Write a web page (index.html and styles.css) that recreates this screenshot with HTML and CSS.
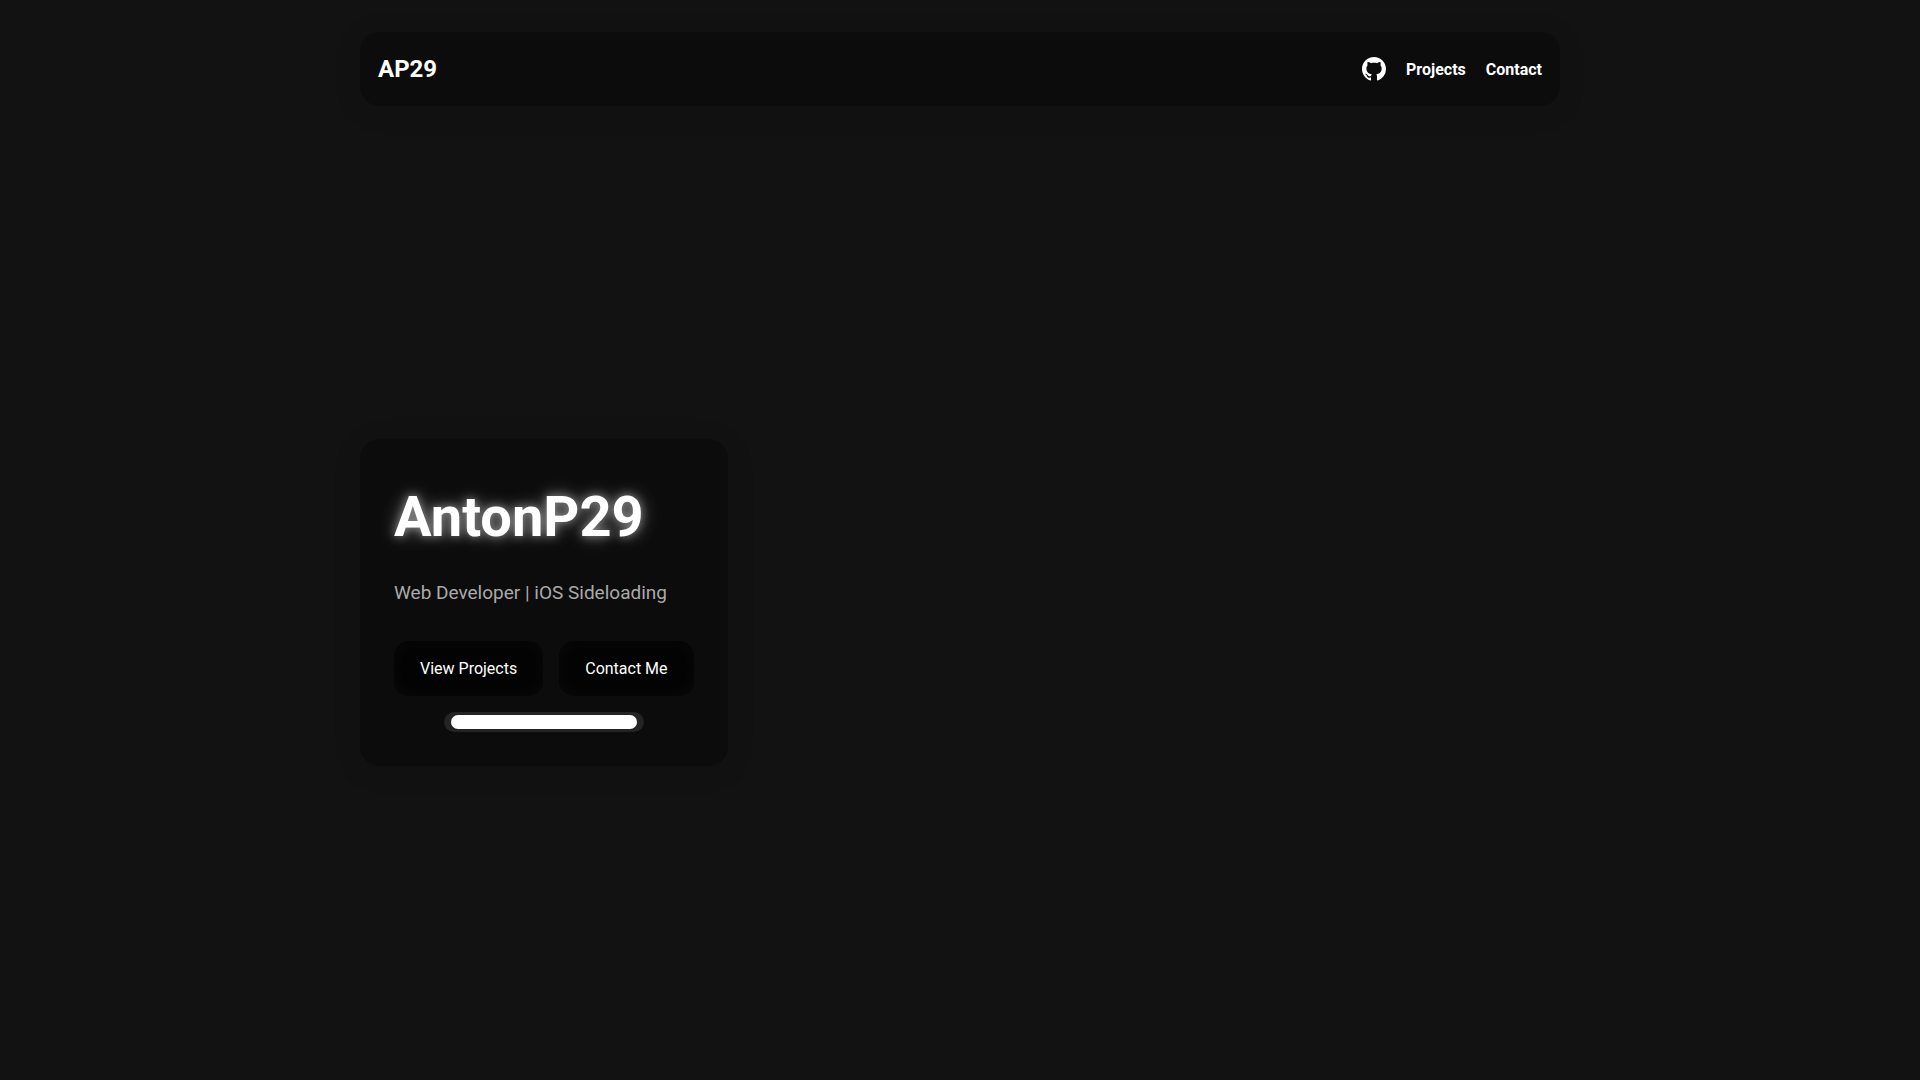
FILE: index.html
```
<!DOCTYPE html>
<html lang="en">
<head>
    <meta charset="utf-8">
    <meta name="viewport" content="width=device-width, initial-scale=1.0">
    <title>AntonP29</title>
    <link rel="stylesheet" href="styles.css">
</head>
<body>
<div class="container">
    <nav class="navbar">
        <a class="logo" href="#home">AP29</a>
        <div class="nav-links">
            <a class="nav-icon" href="#github" aria-label="GitHub">
                <svg viewBox="0 0 16 16" width="24" height="24" fill="currentColor" aria-hidden="true">
                    <path d="M8 0C3.58 0 0 3.58 0 8c0 3.54 2.29 6.53 5.47 7.59.4.07.55-.17.55-.38 0-.19-.01-.82-.01-1.49-2.01.37-2.53-.49-2.69-.94-.09-.23-.48-.94-.82-1.13-.28-.15-.68-.52-.01-.53.63-.01 1.08.58 1.23.82.72 1.21 1.87.87 2.33.66.07-.52.28-.87.51-1.07-1.78-.2-3.64-.89-3.64-3.95 0-.87.31-1.59.82-2.15-.08-.2-.36-1.02.08-2.12 0 0 .67-.21 2.2.82.64-.18 1.32-.27 2-.27s1.36.09 2 .27c1.53-1.04 2.2-.82 2.2-.82.44 1.1.16 1.92.08 2.12.51.56.82 1.27.82 2.15 0 3.07-1.87 3.75-3.65 3.95.29.25.54.73.54 1.48 0 1.07-.01 1.93-.01 2.2 0 .21.15.46.55.38A8.01 8.01 0 0 0 16 8c0-4.42-3.58-8-8-8z"/>
                </svg>
            </a>
            <a href="#projects">Projects</a>
            <a href="#contact">Contact</a>
        </div>
    </nav>

    <main class="hero" id="home">
        <div class="hero-card">
            <h1>AntonP29</h1>
            <p>Web Developer | iOS Sideloading</p>
            <div class="buttons">
                <a class="btn" href="#projects">View Projects</a>
                <a class="btn" href="#contact">Contact Me</a>
            </div>
            <div class="bar"><div class="bar-fill"></div></div>
        </div>
    </main>
</div>
</body>
</html>
```
FILE: styles.css
```
*{
    box-sizing: border-box;
    margin: 0;
    padding: 0;
}
body{
    background-color: #121212;
    color: #fff;
    font-family: Roboto, "Liberation Sans", sans-serif;
    font-size: 16px;
    line-height: 25px;
}
a{ color: inherit; text-decoration: none; }

.container{
    max-width: 1200px;
    margin: 0 auto;
    padding-top: 32px;
}

/* navbar and hero card share the same panel look */
.navbar, .hero-card{
    border-radius: 20px;
    background-color: #0c0c0c;
    box-shadow: 0 4px 30px rgba(0, 0, 0, 0.1);
}
.navbar{
    display: flex;
    justify-content: space-between;
    align-items: center;
    padding: 18px;
    margin-bottom: 32px;
}
.logo{
    font-size: 24px;
    line-height: 38px;
    font-weight: 700;
}
.nav-links{
    display: flex;
    align-items: center;
    gap: 20px;
    font-weight: 700;
}
.nav-icon{ display: flex; }

.hero{
    display: flex;
    align-items: center;
    min-height: 86vh;
}
.hero-card{ padding: 34px; }
.hero-card h1{
    font-size: 56px;
    line-height: 88px;
    margin-bottom: 16px;
    text-shadow: 0 0 10px rgba(255, 255, 255, 0.5), 0 0 20px rgba(255, 255, 255, 0.3), 0 0 30px rgba(255, 255, 255, 0.1);
}
.hero-card p{
    font-size: 19px;
    line-height: 32px;
    margin-bottom: 32px;
    color: #aaa;
}

.buttons{
    display: flex;
    gap: 16px;
}
.btn{
    padding: 15px 26px;
    border-radius: 15px;
    background-color: #030303;
    box-shadow: inset 0 0 20px rgba(255, 255, 255, 0.03);
}

.bar{
    width: 200px;
    margin: 16px auto 0;
    padding: 3px 7px;
    border-radius: 10px;
    background-color: #242424;
}
.bar-fill{
    height: 14px;
    border-radius: 7px;
    background-color: #fff;
}
```
